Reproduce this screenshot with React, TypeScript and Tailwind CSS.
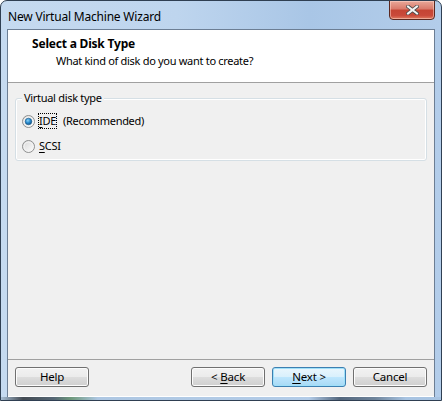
import React from "react";

const font = { fontFamily: '"Noto Sans", "Open Sans", Arial, sans-serif' };

function Radio({ checked }: { checked?: boolean }) {
  return (
    <svg width="13" height="13" viewBox="0 0 13 13" className="shrink-0">
      <defs>
        <linearGradient id={checked ? "rg1" : "rg0"} x1="0" y1="0" x2="1" y2="1">
          <stop offset="0" stopColor="#d6d6d6" />
          <stop offset="1" stopColor="#ffffff" />
        </linearGradient>
        <radialGradient id="dot" cx="0.4" cy="0.35" r="0.7">
          <stop offset="0" stopColor="#8fd6f6" />
          <stop offset="0.5" stopColor="#2a8bd0" />
          <stop offset="1" stopColor="#104f7e" />
        </radialGradient>
      </defs>
      <circle cx="6.5" cy="6.5" r="6" fill={`url(#${checked ? "rg1" : "rg0"})`} stroke="#8e8f8f" />
      <circle cx="6.5" cy="6.5" r="4.5" fill="none" stroke="#f4f4f4" strokeWidth="1" />
      {checked && <circle cx="6.5" cy="6.5" r="3.3" fill="url(#dot)" stroke="#1b5b8c" strokeWidth="0.6" />}
    </svg>
  );
}

function Btn({ children, primary }: { children: React.ReactNode; primary?: boolean }) {
  return (
    <button
      className={`w-[74px] h-[20px] rounded-[3px] border text-[11.5px] tracking-[-0.2px] text-black flex items-center justify-center ${
        primary
          ? "border-[#3c7fb1] bg-[linear-gradient(#eaf6fd_0%,#d9f0fc_50%,#bee6fd_51%,#a7d9f5_100%)] shadow-[inset_0_0_0_1px_#9fe0f9]"
          : "border-[#707070] bg-[linear-gradient(#f2f2f2_0%,#ebebeb_50%,#dddddd_51%,#cfcfcf_100%)] shadow-[inset_0_0_0_1px_#fcfcfc]"
      }`}
      style={font}
    >
      {children}
    </button>
  );
}

export default function App() {
  return (
    <div
      className="w-[442px] h-[401px] relative flex flex-col rounded-t-[7px] border border-[#2f3f52] bg-[linear-gradient(90deg,#c5daf0_0%,#bed5ee_40%,#a9c6e6_70%,#b3cdea_100%)] overflow-hidden text-[11px] tracking-[-0.3px]"
      style={font}
    >
      {/* title bar */}
      <div className="h-[28px] flex items-center pl-[7px] pt-[3px] text-[12px] tracking-[-0.2px] text-black">
        New Virtual Machine Wizard
      </div>
      <div className="absolute top-[-1px] right-[6px] w-[46px] h-[20px] rounded-b-[4px] border border-[#5b2820] bg-[linear-gradient(#e9a899_0%,#d9796a_45%,#c54433_50%,#c9493a_80%,#e07a5f_100%)] shadow-[inset_0_0_0_1px_rgba(255,220,210,0.5)] flex items-center justify-center">
        <svg width="13" height="10" viewBox="0 0 13 10">
          <path d="M2 1.5 L11 8.5 M11 1.5 L2 8.5" stroke="#4a4a4a" strokeWidth="3.6" strokeLinecap="square" />
          <path d="M2 1.5 L11 8.5 M11 1.5 L2 8.5" stroke="#f4f4f4" strokeWidth="2" strokeLinecap="square" />
        </svg>
      </div>

      {/* client */}
      <div className="mx-[6px] h-[368px] border border-[#6c7e94] bg-[#f0f0f0] flex flex-col">
        <div className="h-[53px] bg-white border-b border-[#a0a0a0] pt-[6px]">
          <div className="pl-[24px] text-[12px] tracking-[-0.2px] font-bold text-black leading-[16px]">
            Select a Disk Type
          </div>
          <div className="pl-[48px] text-black leading-[16px] mt-[1px]">
            What kind of disk do you want to create?
          </div>
        </div>

        <div className="flex-1 px-[7px] pt-[15px]">
          <div className="relative h-[63px] rounded-[3px] border border-[#d5dfe5] shadow-[inset_0_0_0_1px_#ffffff]">
            <div className="absolute -top-[9px] left-[6px] px-[2px] bg-[#f0f0f0] leading-[16px] text-black">
              Virtual disk type
            </div>
            <div className="pt-[14px] pl-[6px] flex flex-col gap-[9px] text-black">
              <div className="flex items-center h-[16px]">
                <Radio checked />
                <span className="ml-[3px] border border-dotted border-black leading-[14px]">
                  <span className="underline underline-offset-2">I</span>DE
                </span>
                <span className="ml-[6px]">(Recommended)</span>
              </div>
              <div className="flex items-center h-[16px]">
                <Radio />
                <span className="ml-[4px]">
                  <span className="underline underline-offset-2">S</span>CSI
                </span>
              </div>
            </div>
          </div>
        </div>

        <div className="border-t border-[#a0a0a0] shadow-[0_1px_0_#ffffff] h-[37px] flex items-center px-[7px] pb-[3px]">
          <Btn>Help</Btn>
          <div className="flex-1" />
          <div className="flex gap-[7px]">
            <Btn>
              &lt; <span className="underline underline-offset-2 ml-[3px]">B</span>ack
            </Btn>
            <Btn primary>
              <span className="underline underline-offset-2">N</span>ext &gt;
            </Btn>
            <Btn>Cancel</Btn>
          </div>
        </div>
      </div>

      {/* bottom frame */}
      <div className="flex-1 bg-[linear-gradient(90deg,#9fb6cc_0%,#23272b_5%,#3a4a56_12%,#5a8a60_16%,#a9c3df_22%,#b5cde8_70%,#3e4f63_77%,#5f7388_85%,#a6c2e0_92%)] opacity-80" />
    </div>
  );
}
